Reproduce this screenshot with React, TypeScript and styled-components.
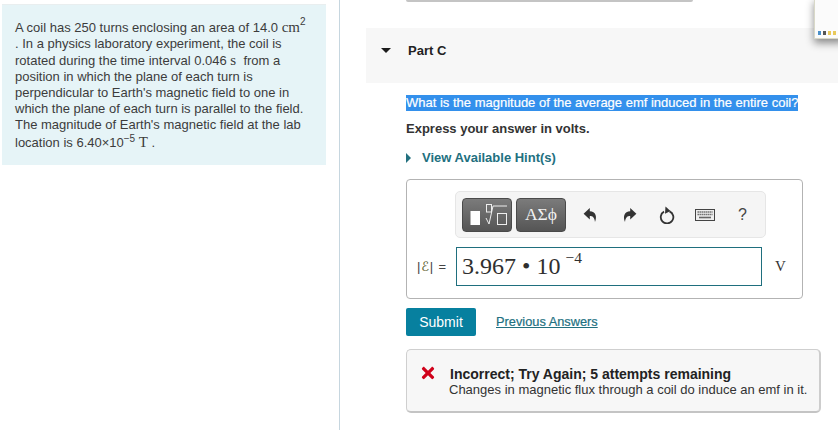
import styled, { createGlobalStyle } from "styled-components";
import { FaTimes } from "react-icons/fa";

const GlobalStyle = createGlobalStyle`
  html, body {
    margin: 0;
    padding: 0;
    background: #fff;
  }
  body {
    font-family: "Liberation Sans", Arial, sans-serif;
    color: #333;
  }
`;

const Page = styled.div`
  position: relative;
  display: flex;
  width: 838px;
  height: 430px;
  overflow: hidden;
  background: #fff;
`;

const Sidebar = styled.aside`
  box-sizing: border-box;
  width: 340px;
  flex: none;
  padding: 4px 13px 0 2px;
  border-right: 1px solid #c6d6df;
`;

const Problem = styled.div`
  box-sizing: border-box;
  height: 161px;
  padding: 14px 10px 0 13px;
  background: #e6f4f7;
  border-top: 1px solid #e9eeef;
  font-size: 13px;
  line-height: 16px;
  color: #3c3c3c;
  white-space: nowrap;
`;

const Serif = styled.span`
  font-family: "Liberation Serif", serif;
  font-size: 15px;
`;

const Sup = styled.sup`
  font-size: 10px;
  line-height: 0;
  vertical-align: ${(props: { $lift?: number }) => props.$lift ?? 7}px;
`;

const LastLine = styled.div`
  margin-top: 1px;
`;

const Main = styled.main`
  flex: 1;
  min-width: 0;
  padding-left: 26px;
`;

const PrevBox = styled.div`
  width: 287px;
  height: 2px;
  margin-left: 40px;
  background: #c4c4c4;
  border-radius: 0 0 4px 4px;
`;

const PartHeader = styled.div`
  display: flex;
  align-items: center;
  height: 55px;
  margin-top: 26px;
  padding: 0 0 10px 15px;
  box-sizing: border-box;
  background: #f7f7f7;
`;

const DownCaret = styled.span`
  width: 0;
  height: 0;
  border-left: 5px solid transparent;
  border-right: 5px solid transparent;
  border-top: 5px solid #1c1c1c;
  margin-right: 17px;
`;

const PartTitle = styled.div`
  font-size: 13px;
  font-weight: bold;
  color: #222;
`;

const Content = styled.div`
  padding-left: 40px;
`;

const Question = styled.div`
  display: inline-block;
  margin-top: 12px;
  background: #3390ec;
  color: #fff;
  font-size: 13px;
  line-height: 16px;
  white-space: nowrap;
  -webkit-text-stroke: 0.2px #fff;
`;

const Instruction = styled.div`
  margin-top: 10px;
  font-size: 13px;
  font-weight: bold;
  line-height: 16px;
  color: #333;
`;

const HintRow = styled.div`
  display: flex;
  align-items: center;
  margin-top: 13px;
  color: #22707f;
  font-size: 13px;
  font-weight: bold;
  line-height: 16px;
`;

const RightCaret = styled.span`
  width: 0;
  height: 0;
  border-top: 5px solid transparent;
  border-bottom: 5px solid transparent;
  border-left: 5px solid #22707f;
  margin-right: 11px;
`;

const AnswerBox = styled.div`
  box-sizing: border-box;
  width: 397px;
  height: 120px;
  margin-top: 13px;
  padding: 11px 0 0 10px;
  border: 1px solid #b3b3b3;
  border-radius: 4px;
`;

const Toolbar = styled.div`
  box-sizing: border-box;
  display: flex;
  align-items: center;
  width: 311px;
  height: 47px;
  margin-left: 38px;
  padding-left: 6px;
  background: #f5f5f5;
  border: 1px solid #e6e6e6;
  border-radius: 5px;
`;

const TemplateButton = styled.div<{ $width: number }>`
  box-sizing: border-box;
  display: flex;
  align-items: center;
  justify-content: center;
  width: ${(props) => props.$width}px;
  height: 34px;
  margin-right: 4px;
  background: linear-gradient(#7b7b7b, #555);
  border: 1px solid #4a4a4a;
  border-radius: 4px;
  color: #f2f2f2;
  font-family: "Liberation Serif", serif;
  font-size: 17.5px;
`;

const ToolIcon = styled.svg<{ $gap: number }>`
  flex: none;
  margin-left: ${(props) => props.$gap}px;
  color: #333;
`;

const HelpMark = styled.span`
  margin-left: 23px;
  font-size: 16px;
  color: #444;
`;

const InputRow = styled.div`
  display: flex;
  align-items: center;
  margin-top: 9px;
`;

const Label = styled.div`
  width: 39px;
  flex: none;
  font-size: 13px;
  letter-spacing: 0.8px;
  color: #444;
  white-space: nowrap;
`;

const LabelScript = styled.i`
  font-family: "DejaVu Sans", sans-serif;
  font-style: normal;
  color: #5a5a2a;
`;

const MathInput = styled.div`
  box-sizing: border-box;
  width: 306px;
  height: 39px;
  padding-left: 5px;
  border: 1px solid #1f6f7e;
  font-family: "Liberation Serif", serif;
  font-size: 24px;
  line-height: 37px;
  color: #2f2f2f;
  white-space: nowrap;
`;

const Exponent = styled.sup`
  font-size: 15.5px;
  line-height: 0;
  vertical-align: 11px;
  margin-left: 5px;
`;

const Unit = styled.div`
  margin-left: 13px;
  font-family: "Liberation Serif", serif;
  font-size: 15px;
  color: #333;
`;

const ActionRow = styled.div`
  display: flex;
  align-items: center;
  margin-top: 9px;
`;

const SubmitButton = styled.button`
  width: 70px;
  height: 28px;
  padding: 0;
  border: none;
  border-radius: 2px;
  background: #07809f;
  color: #fff;
  font-family: inherit;
  font-size: 14px;
`;

const PreviousLink = styled.a`
  margin: -1px 0 0 20px;
  font-size: 12.8px;
  color: #22707f;
  text-decoration: underline;
  -webkit-text-stroke: 0.2px #22707f;
`;

const Feedback = styled.div`
  box-sizing: border-box;
  display: flex;
  width: 415px;
  height: 64px;
  margin-top: 13px;
  padding: 16px 0 0 13px;
  background: #f7f7f7;
  border: 1px solid #cfcfcf;
  border-bottom: 2px solid #c4c4c4;
  border-right: 2px solid #cdcdcd;
  border-radius: 5px;
`;

const FeedbackIcon = styled(FaTimes)`
  flex: none;
  width: 18px;
  height: 18px;
  margin: -2px 12px 0 -1px;
  color: #d0021b;
`;

const FeedbackText = styled.div`
  font-size: 13px;
  line-height: 16px;
  color: #333;
`;

const FeedbackTitle = styled.div`
  margin-left: 1px;
  font-size: 14px;
  font-weight: bold;
  color: #222;
`;

const FeedbackBody = styled.div`
  margin-left: 0;
`;

/* corner of another window lying over the page */
const FloatingWindow = styled.div`
  position: absolute;
  top: -2px;
  right: -6px;
  box-sizing: border-box;
  width: 30px;
  height: 41px;
  padding: 32px 0 0 3px;
  display: flex;
  gap: 2px;
  background: #fbfbfb;
  border: 1px solid #d9d9c8;
  box-shadow: 0 4px 8px rgba(0, 0, 0, 0.45);
`;

const WindowDot = styled.span<{ $color: string }>`
  width: 3px;
  height: 4px;
  background: ${(props) => props.$color};
`;

export default function App() {
  return (
    <>
      <GlobalStyle />
      <Page>
        <Sidebar>
          <Problem>
            A coil has 250 turns enclosing an area of 14.0 <Serif>cm</Serif>
            <Sup>2</Sup>
            <br />. In a physics laboratory experiment, the coil is
            <br />
            rotated during the time interval 0.046 <Serif>s</Serif>&nbsp; from a
            <br />
            position in which the plane of each turn is
            <br />
            perpendicular to Earth's magnetic field to one in
            <br />
            which the plane of each turn is parallel to the field.
            <br />
            The magnitude of Earth's magnetic field at the lab
            <LastLine>
              location is 6.40×10<Sup $lift={5}>−5</Sup> <Serif>T</Serif> .
            </LastLine>
          </Problem>
        </Sidebar>
        <Main>
          <PrevBox />
          <PartHeader>
            <DownCaret />
            <PartTitle>Part C</PartTitle>
          </PartHeader>
          <Content>
            <Question>What is the magnitude of the average emf induced in the entire coil?</Question>
            <Instruction>Express your answer in volts.</Instruction>
            <HintRow>
              <RightCaret />
              View Available Hint(s)
            </HintRow>
            <AnswerBox>
              <Toolbar>
                <TemplateButton $width={50}>
                  <svg width="42" height="30" viewBox="0 0 42 30" fill="none">
                    <rect x="4.500" y="11" width="9.500" height="14" fill="#fff" />
                    <rect x="20.500" y="4.500" width="5" height="7.500" stroke="#eee" />
                    <path d="M20 18l3 6 4-18h14" stroke="#eee" />
                    <rect x="31.500" y="13.500" width="9" height="11" stroke="#eee" />
                  </svg>
                </TemplateButton>
                <TemplateButton $width={50}>ΑΣϕ</TemplateButton>
                <ToolIcon $gap={13} width="15" height="16" viewBox="0 0 15 16" fill="currentColor">
                  <path d="M6.800 1 0.600 6.800l6.200 5.600V9c2.800 0 4.600 1 5.200 6 2.200-5.500.8-10.400-5.200-10.700z" />
                </ToolIcon>
                <ToolIcon $gap={24} width="15" height="16" viewBox="0 0 15 16" fill="currentColor">
                  <path d="M8.200 1l6.200 5.800-6.200 5.600V9c-2.800 0-4.600 1-5.200 6-2.200-5.500-.8-10.400 5.200-10.700z" />
                </ToolIcon>
                <ToolIcon $gap={22} width="16" height="18" viewBox="0 0 16 18" fill="none">
                  <path d="M5 5.600a6.300 6.300 0 1 0 5.500-.3" stroke="currentColor" strokeWidth="1.800" />
                  <path d="M6.500 0.500 11.500 5l-5.500 2.800z" fill="currentColor" />
                </ToolIcon>
                <ToolIcon $gap={20} width="20" height="12" viewBox="0 0 20 12" fill="none">
                  <rect x="0.500" y="0.500" width="19" height="11" fill="#eee" stroke="#444" />
                  <path d="M2.500 3h15M2.500 5.500h15" stroke="#666" strokeWidth="1.400" strokeDasharray="1.400 .6" />
                  <path d="M4 8.500h12" stroke="#666" strokeWidth="1.600" />
                </ToolIcon>
                <HelpMark>?</HelpMark>
              </Toolbar>
              <InputRow>
                <Label>
                  |<LabelScript>ℰ</LabelScript>| =
                </Label>
                <MathInput>
                  3.967 • 10<Exponent>−4</Exponent>
                </MathInput>
                <Unit>V</Unit>
              </InputRow>
            </AnswerBox>
            <ActionRow>
              <SubmitButton>Submit</SubmitButton>
              <PreviousLink>Previous Answers</PreviousLink>
            </ActionRow>
            <Feedback>
              <FeedbackIcon />
              <FeedbackText>
                <FeedbackTitle>Incorrect; Try Again; 5 attempts remaining</FeedbackTitle>
                <FeedbackBody>Changes in magnetic flux through a coil do induce an emf in it.</FeedbackBody>
              </FeedbackText>
            </Feedback>
          </Content>
        </Main>
        <FloatingWindow>
          <WindowDot $color="#4a90c8" />
          <WindowDot $color="#555" />
          <WindowDot $color="#e8c95a" />
          <WindowDot $color="#e8c95a" />
        </FloatingWindow>
      </Page>
    </>
  );
}
